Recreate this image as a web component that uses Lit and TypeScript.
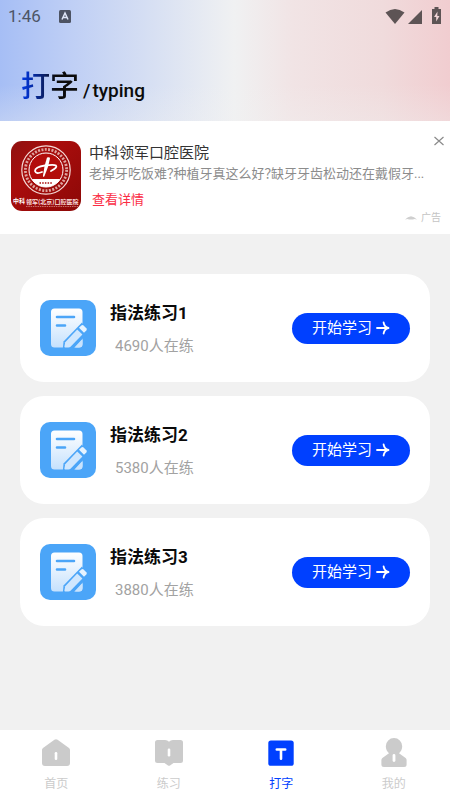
import { LitElement, html, css, svg } from "lit";
import { customElement, property } from "lit/decorators.js";
import { classMap } from "lit/directives/class-map.js";

const lessons = [
  { title: "指法练习1", count: 4690 },
  { title: "指法练习2", count: 5380 },
  { title: "指法练习3", count: 3880 },
];

const tabs = [
  {
    label: "首页",
    icon: svg`<path d="M1 9 12.400.8a2.600 2.600 0 0 1 3.200 0L27 9a2.600 2.600 0 0 1 1 2.200V24a3 3 0 0 1-3 3H3a3 3 0 0 1-3-3V11.200A2.600 2.600 0 0 1 1 9z" fill="currentColor"/><rect x="12.700" y="13" width="2.600" height="8" rx="1.200" fill="#fff"/>`,
  },
  {
    label: "练习",
    icon: svg`<path d="M2.500 1H10q2.600 0 4 1.800Q15.400 1 18 1h7.500A2.500 2.500 0 0 1 28 3.500v18a2.500 2.500 0 0 1-2.500 2.500H18.500L15 26.500q-1 .5-2 0L9.500 24h-7A2.500 2.500 0 0 1 0 21.500v-18A2.500 2.500 0 0 1 2.500 1z" fill="currentColor"/><rect x="12.700" y="9.500" width="2.600" height="8" rx="1.200" fill="#fff"/>`,
  },
  {
    label: "打字",
    icon: svg`<rect x="1.300" y="1.400" width="25.400" height="25.400" rx="2.600" fill="currentColor"/><path d="M9.800 10.500h8.400M14 10.500v9.300" stroke="#fff" stroke-width="2.600" stroke-linecap="round" fill="none"/>`,
  },
  {
    label: "我的",
    icon: svg`<path d="M14-.9a8.200 8.200 0 0 1 8.200 8.200c0 3-1.200 5.300-3.200 7l6.600 4.700q1 .8 1 2V25.500a2.500 2.500 0 0 1-2.500 2.500H3.900A2.500 2.500 0 0 1 1.400 25.500v-4.500q0-1.200 1-2L9 14.300c-2-1.700-3.200-4-3.200-7A8.200 8.200 0 0 1 14-.9z" fill="currentColor"/><rect x="12.600" y="15" width="2.800" height="8" rx="1.400" fill="#fff"/>`,
  },
];

@customElement("lesson-card")
class LessonCard extends LitElement {
  @property() heading = "";
  @property({ type: Number }) count = 0;

  static styles = css`
    :host {
      display: block;
    }
    .card {
      box-sizing: border-box;
      min-height: 108px;
      padding: 20px;
      border-radius: 24px;
      background: #fff;
      display: flex;
      align-items: center;
    }
    .icon {
      flex: none;
      width: 56px;
      height: 56px;
    }
    .info {
      flex: 1;
      margin-left: 14px;
    }
    .title {
      margin: 0 0 9px;
      font-size: 17px;
      line-height: 26px;
      font-weight: 700;
      color: #0a0a0a;
    }
    .count {
      margin: 0;
      padding-left: 5px;
      font-size: 15px;
      line-height: 22px;
      color: #a2a2a2;
    }
    .start {
      flex: none;
      display: flex;
      align-items: center;
      justify-content: center;
      gap: 4px;
      width: 118px;
      height: 31px;
      padding: 0;
      border: 0;
      border-radius: 16px;
      background: #0040ff;
      color: #fff;
      font: inherit;
      font-size: 15px;
      line-height: 22px;
      cursor: pointer;
    }
    .arrow {
      width: 14px;
      height: 14px;
    }
  `;

  render() {
    return html`
      <article class="card">
        <svg class="icon" viewBox="0 0 56 56" aria-hidden="true">
          <defs>
            <linearGradient id="sheet" x1="0" y1="0" x2="0" y2="1">
              <stop offset="0" stop-color="#fff" />
              <stop offset="1" stop-color="#c5e1fd" />
            </linearGradient>
          </defs>
          <rect width="56" height="56" rx="10" fill="#4ba5f8" />
          <path
            d="M14.500 8.500h24.500a3.500 3.500 0 0 1 3.500 3.500v32a3.500 3.500 0 0 1-3.500 3.500H14.500a3.500 3.500 0 0 1-3.500-3.500V12a3.500 3.500 0 0 1 3.500-3.500z"
            fill="url(#sheet)"
          />
          <path d="M17 17h17M17 25.500h8" stroke="#4ba5f8" stroke-width="2.600" stroke-linecap="round" />
          <path d="M42 22.500 23.500 41.500 22.800 49H33L48 33z" fill="#4ba5f8" />
          <path d="M25.200 47.500q-.8 0-.8-1l.8-4.300L37.200 29.600l5.200 5L30.800 46.500q-1 1-2.500 1z" fill="#d0e7fe" />
          <path d="M39 27.800 41.300 25.600q1.200-1 2.300 0l2.700 2.600q1 1.200 0 2.300L44 32.800z" fill="#e6f3ff" />
          <path d="M35 47.500 42.500 39.500v4.500a3.500 3.500 0 0 1-3.500 3.500z" fill="#c9e3fd" />
        </svg>
        <div class="info">
          <h2 class="title">${this.heading}</h2>
          <p class="count">${this.count}人在练</p>
        </div>
        <button class="start" type="button">
          开始学习
          <svg class="arrow" viewBox="0 0 14 14" aria-hidden="true">
            <path
              d="M1 7h11M7.600 1.500Q8.300 6 12.500 7 8.300 8 7.600 12.500"
              fill="none"
              stroke="#fff"
              stroke-width="1.800"
              stroke-linecap="round"
              stroke-linejoin="round"
            />
          </svg>
        </button>
      </article>
    `;
  }
}

@customElement("ad-banner")
class AdBanner extends LitElement {
  static styles = css`
    :host {
      display: block;
    }
    .ad {
      position: relative;
      box-sizing: border-box;
      min-height: 113px;
      padding: 20px 24px 8px 11px;
      background: #fff;
      display: flex;
      gap: 8px;
    }
    .logo {
      flex: none;
      width: 70px;
      height: 70px;
    }
    .body {
      flex: 1;
      min-width: 0;
    }
    .name {
      margin: 1px 0 0;
      font-size: 15px;
      line-height: 22px;
      font-weight: 400;
      color: #333;
    }
    .text {
      margin: 0;
      font-size: 13px;
      line-height: 20px;
      font-feature-settings: "palt";
      color: #8c8c8c;
      white-space: nowrap;
      overflow: hidden;
    }
    .more {
      display: inline-block;
      margin: 6px 0 0 3px;
      font-size: 13px;
      line-height: 20px;
      color: #fb2c44;
      text-decoration: none;
    }
    .close {
      position: absolute;
      top: 13px;
      right: 4px;
      width: 14px;
      height: 14px;
      padding: 0;
      border: 0;
      background: none;
      cursor: pointer;
    }
    .close svg {
      display: block;
      width: 14px;
      height: 14px;
    }
    .tag {
      position: absolute;
      right: 9px;
      bottom: 8px;
      display: flex;
      align-items: center;
      gap: 4px;
      font-size: 10px;
      line-height: 16px;
      color: #c4c4c4;
    }
    .tag svg {
      width: 12px;
      height: 8px;
    }
    .caption {
      font-family: "Noto Sans CJK SC", sans-serif;
      font-weight: 700;
    }
  `;

  render() {
    return html`
      <section class="ad" aria-label="广告">
        <svg class="logo" viewBox="0 0 70 70" role="img" aria-label="中科领军口腔医院">
          <defs>
            <linearGradient id="red" x1="0" y1="0" x2="1" y2="1">
              <stop offset="0" stop-color="#8f1110" />
              <stop offset=".35" stop-color="#a90d0c" />
              <stop offset="1" stop-color="#8c0807" />
            </linearGradient>
            <clipPath id="disc"><circle cx="35" cy="29" r="17" /></clipPath>
          </defs>
          <rect width="70" height="70" rx="11" fill="url(#red)" />
          <circle cx="35" cy="29" r="24.200" fill="none" stroke="#f3d9d6" stroke-width="1.200" />
          <circle cx="35" cy="29" r="20.600" fill="none" stroke="#dfa5a0" stroke-width="2.800" stroke-dasharray="2 1.400" />
          <circle cx="35" cy="29" r="17" fill="#b30d0b" stroke="#fff" stroke-width="1" />
          <rect x="15" y="38" width="40" height="12" fill="#fff" clip-path="url(#disc)" />
          <path d="M28.500 42h13" stroke="#a90d0c" stroke-width="1.600" stroke-dasharray="1.500 1.200" />
          <path
            d="M36 16.500q3-1 3 1-1.500 9-5.500 17.500-1.500 2-1.500-.5Q33 25 36 16.500z"
            fill="#fff"
          />
          <path
            d="M31 31q-6 2.500-7-1 0-4 10-5.500 9-1.200 11 0 1.800 2-5 5.500"
            fill="none"
            stroke="#fff"
            stroke-width="1.800"
            stroke-linecap="round"
          />
          <text class="caption" x="2" y="62" font-size="6" fill="#fff">中科</text>
          <text class="caption" x="15" y="63" font-size="6" fill="#f7dddd">领军(北京)口腔医院</text>
          <path d="M15 65.500h52" stroke="#c9706b" stroke-width="1" stroke-dasharray="1.500 .8" />
        </svg>
        <div class="body">
          <h2 class="name">中科领军口腔医院</h2>
          <p class="text">老掉牙吃饭难？种植牙真这么好？缺牙牙齿松动还在戴假牙...</p>
          <a class="more" href="#">查看详情</a>
        </div>
        <button class="close" type="button" aria-label="关闭">
          <svg viewBox="0 0 14 14"><path d="M2.500 3l9 8M11.500 3l-9 8" stroke="#8a8a8a" stroke-width="1.200" /></svg>
        </button>
        <span class="tag">
          <svg viewBox="0 0 12 8" aria-hidden="true">
            <path d="M0 5.500Q3 2.500 6 2.200 9 2.500 12 5.500 9 4.500 8 5.500H4Q3 4.500 0 5.500z" fill="#cfcfcf" />
          </svg>
          广告
        </span>
      </section>
    `;
  }
}

@customElement("app-root")
class AppRoot extends LitElement {
  static styles = css`
    :host {
      display: flex;
      flex-direction: column;
      min-height: 100vh;
      background: #f1f1f1;
      font-family: Roboto, "Noto Sans CJK SC", sans-serif;
    }
    .header {
      box-sizing: border-box;
      min-height: 121px;
      padding: 6px 8px 12px;
      background: linear-gradient(to bottom, rgba(241, 241, 241, 0) 70%, rgba(241, 241, 241, 0.3)),
        linear-gradient(to right, #a6bef5 0%, #bfcff5 16%, #d6dff3 33%, #f0f1f2 52%, #f1e4e5 65%, #f0dbdc 85%, #f1cdd0 100%);
    }
    .status {
      display: flex;
      align-items: center;
      height: 20px;
      color: #4d5566;
    }
    .time {
      font-size: 17px;
      line-height: 20px;
    }
    .badge {
      width: 12px;
      height: 13px;
      margin-left: 18px;
    }
    .signals {
      width: 58px;
      height: 18px;
      margin-left: auto;
    }
    .brand {
      display: flex;
      align-items: flex-end;
      margin: 41px 0 0 13px;
      font-weight: 500;
      color: #0b0b0b;
    }
    .name {
      font-size: 29px;
      line-height: 40px;
      background: linear-gradient(to right, #0038e8 0%, #0a1f66 40%, #0b0b0b 60%);
      background-clip: text;
      -webkit-background-clip: text;
      color: transparent;
    }
    .latin {
      display: flex;
      gap: 2px;
      margin: 0 0 4px 4px;
      font-size: 19px;
      line-height: 24px;
    }
    .lessons {
      flex: 1;
      display: flex;
      flex-direction: column;
      gap: 14px;
      padding: 40px 20px 20px;
    }
    .tabs {
      display: flex;
      box-sizing: border-box;
      min-height: 70px;
      background: #fff;
    }
    .tab {
      flex: 1;
      display: flex;
      flex-direction: column;
      align-items: center;
      gap: 6px;
      padding-top: 9px;
      font-size: 12px;
      line-height: 20px;
      color: #cbcbcb;
      text-decoration: none;
    }
    .tab.active {
      color: #0040ff;
    }
    .glyph {
      width: 28px;
      height: 29px;
      overflow: visible;
    }
  `;

  render() {
    return html`
      <header class="header">
        <div class="status">
          <span class="time">1:46</span>
          <svg class="badge" viewBox="0 0 12 13" aria-hidden="true">
            <rect width="12" height="13" rx="1.500" fill="#4d5363" />
            <path d="M3 9.500 6 3l3 6.500M4 7.600h4" fill="none" stroke="#dfe6f7" stroke-width="1.500" />
          </svg>
          <svg class="signals" viewBox="0 0 58 18" aria-hidden="true">
            <path d="M1.500 5.500Q11 -1.500 20.500 5.500L11 17z" fill="#5d5455" />
            <path d="M38 3v14H24z" fill="#5d5455" />
            <path d="M50.500 0h4v2H57v15h-9V2h2.500z" fill="#5d5455" />
            <path d="M53.500 4.500 50 10h2.200v4.500L55.500 9h-2.200z" fill="#f0d4d6" />
          </svg>
        </div>
        <h1 class="brand">
          <span class="name">打字</span>
          <span class="latin"><span>/</span><span>typing</span></span>
        </h1>
      </header>
      <ad-banner></ad-banner>
      <main class="lessons">
        ${lessons.map((l) => html`<lesson-card .heading=${l.title} .count=${l.count}></lesson-card>`)}
      </main>
      <nav class="tabs">
        ${tabs.map(
          (t) => html`
            <a class=${classMap({ tab: true, active: t.label === "打字" })} href="#">
              <svg class="glyph" viewBox="0 0 28 29" aria-hidden="true">${t.icon}</svg>
              ${t.label}
            </a>
          `
        )}
      </nav>
    `;
  }
}
